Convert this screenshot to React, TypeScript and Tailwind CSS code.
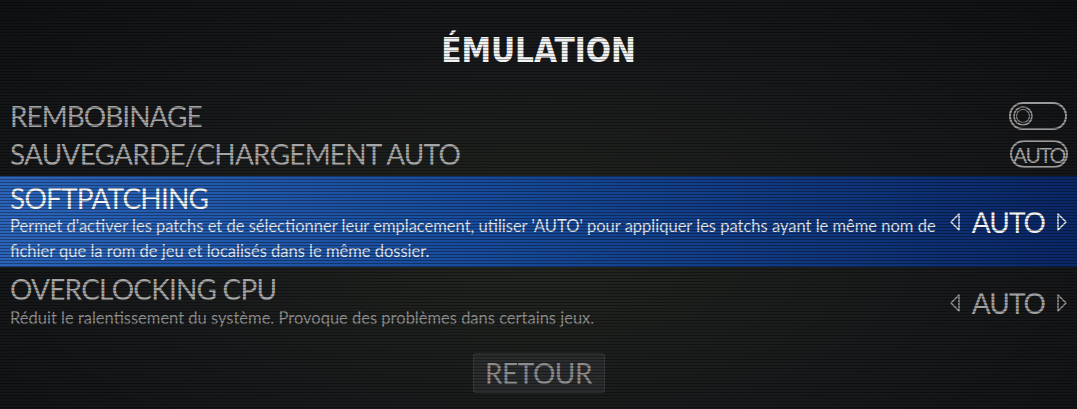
import React from 'react';

const Toggle: React.FC = () => (
  <svg width="60" height="30" viewBox="0 0 60 30" className="block">
    <rect x="2" y="2" width="56" height="26" rx="13" fill="none" stroke="#9a9a9a" strokeWidth="2" />
    <circle cx="15" cy="15" r="9" fill="none" stroke="#9a9a9a" strokeWidth="1.6" />
    <circle cx="15" cy="15" r="6.5" fill="none" stroke="#8a8a8a" strokeWidth="1.2" />
  </svg>
);

const AutoPill: React.FC = () => (
  <div className="flex h-[28px] w-[58px] items-center justify-center rounded-full border-2 border-[#9a9a9a] text-[21px] leading-none tracking-[-1.5px] text-[#a8a8a8]">
    AUTO
  </div>
);

const Arrow: React.FC<{ dir: 'left' | 'right'; color: string }> = ({ dir, color }) => (
  <svg width="12" height="20" viewBox="0 0 12 20" className="block">
    {dir === 'left' ? (
      <path d="M10 2 L2 10 L10 18 Z" fill="none" stroke={color} strokeWidth="1.4" strokeLinejoin="round" />
    ) : (
      <path d="M2 2 L10 10 L2 18 Z" fill="none" stroke={color} strokeWidth="1.4" strokeLinejoin="round" />
    )}
  </svg>
);

const Picker: React.FC<{ active?: boolean }> = ({ active }) => {
  const color = active ? '#e8eef8' : '#9a9a9a';
  return (
    <div className={`flex items-center gap-[11px] ${active ? 'text-[#f2f4f8]' : 'text-[#a0a0a0]'}`}>
      <Arrow dir="left" color={color} />
      <span className="text-[28px] leading-none tracking-[-1px]">AUTO</span>
      <Arrow dir="right" color={color} />
    </div>
  );
};

export default function App() {
  return (
    <div
      className="relative h-[409px] w-[1077px] overflow-hidden bg-[#18191a] text-[#a6a6a6]"
      style={{ fontFamily: 'Lato, "Open Sans", sans-serif' }}
    >
      <div className="absolute inset-0 bg-[radial-gradient(ellipse_at_50%_60%,#22251f_0%,#18191b_55%,#101112_100%)]" />

      <div className="relative flex h-full flex-col">
        <h1
          className="pt-[31px] text-center text-[33px] font-bold leading-[40px] text-[#f2f2f2]"
          style={{ fontFamily: '"DejaVu Sans Condensed", "DejaVu Sans", sans-serif' }}
        >
          ÉMULATION
        </h1>

        <div className="mt-[26px] flex flex-col">
          <div className="flex h-[38px] items-center justify-between pl-[10px] pr-[9px]">
            <span className="text-[28px] leading-none tracking-[-1px]">REMBOBINAGE</span>
            <Toggle />
          </div>
          <div className="flex h-[38px] items-center justify-between pl-[10px] pr-[9px]">
            <span className="text-[28px] leading-none tracking-[-0.8px]">SAUVEGARDE/CHARGEMENT AUTO</span>
            <AutoPill />
          </div>

          <div className="mt-[3px] flex h-[91px] items-center justify-between bg-[linear-gradient(90deg,#2a63b8_0%,#174a9a_45%,#0a2766_100%)] pl-[10px] pr-[9px]">
            <div className="flex flex-col">
              <span className="mt-[2px] text-[28px] leading-[32px] tracking-[-0.8px] text-[#f4f6fa]">SOFTPATCHING</span>
              <p className="text-[16.5px] leading-[25px] text-[#e2e8f2]">
                Permet d'activer les patchs et de sélectionner leur emplacement, utiliser 'AUTO' pour appliquer les patchs ayant le même nom de
                <br />
                fichier que la rom de jeu et localisés dans le même dossier.
              </p>
            </div>
            <Picker active />
          </div>

          <div className="flex h-[66px] items-center justify-between pl-[10px] pr-[9px]">
            <div className="flex flex-col">
              <span className="mt-[2px] text-[28px] leading-[32px] tracking-[-0.8px]">OVERCLOCKING CPU</span>
              <p className="mt-[2px] text-[16.5px] leading-[22px] text-[#8e8e8e]">
                Réduit le ralentissement du système. Provoque des problèmes dans certains jeux.
              </p>
            </div>
            <div className="mt-[5px]">
              <Picker />
            </div>
          </div>
        </div>

        <div className="mt-[20px] flex justify-center">
          <div className="flex h-[40px] w-[132px] items-center justify-center rounded-[3px] border border-[#3c3d3e] bg-[#2a2b2c] text-[28px] tracking-[-0.5px] text-[#8c8c8c]">
            RETOUR
          </div>
        </div>
      </div>

      <div className="pointer-events-none absolute inset-0 bg-[repeating-linear-gradient(to_bottom,transparent_0px,transparent_2px,rgba(0,0,0,0.35)_2px,rgba(0,0,0,0.35)_3px)]" />
    </div>
  );
}
